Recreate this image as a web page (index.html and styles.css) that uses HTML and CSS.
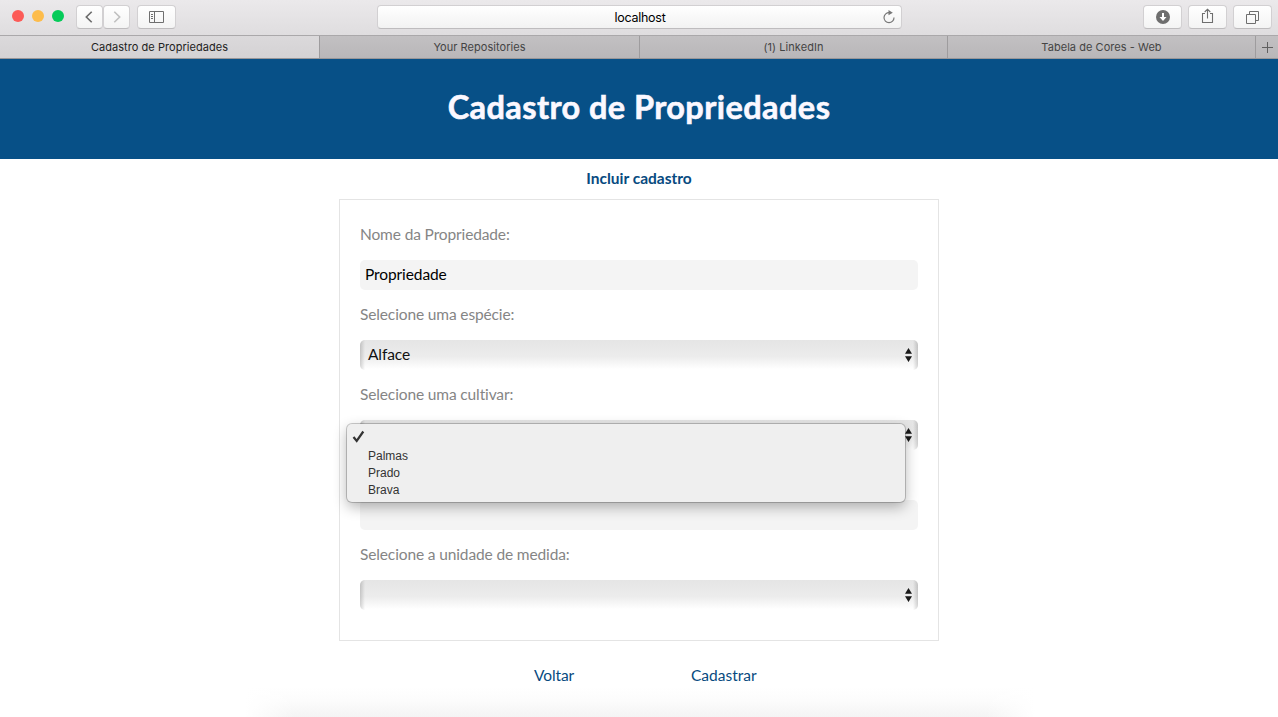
FILE: index.html
```html
<!DOCTYPE html>
<html lang="pt-BR">
<head>
<meta charset="utf-8">
<title>Cadastro de Propriedades</title>
<link rel="stylesheet" href="styles.css">
</head>
<body>
<div class="toolbar">
  <div class="left-tools">
    <div class="lights"><span class="light red"></span><span class="light yellow"></span><span class="light green"></span></div>
    <div class="history">
      <span class="tool nav"><svg width="26" height="22" viewBox="0 0 26 22"><path d="M15.3 5.5 9.7 11l5.6 5.5" fill="none" stroke="#6b6b6b" stroke-width="1.7"/></svg></span>
      <span class="tool nav"><svg width="26" height="22" viewBox="0 0 26 22"><path d="M10.7 5.5l5.6 5.5-5.6 5.5" fill="none" stroke="#c0c0c0" stroke-width="1.7"/></svg></span>
    </div>
    <span class="tool"><svg width="16" height="13" viewBox="0 0 16 13"><path d="M.5.5h14v11H.5zM5.5.5v11M2 3.5h2M2 5.500h2M2 7.500h2" fill="none" stroke="#6f6f6f"/></svg></span>
  </div>
  <div class="address"><span class="host">localhost</span>
    <svg class="reload" width="14" height="15" viewBox="0 0 14 15"><path d="M7.500 2.700A5 5 0 1 0 12 7.500" fill="none" stroke="#777" stroke-width="1.200"/><path d="M6.500 0l4.300 2.700L6.500 5.200z" fill="#777"/></svg>
  </div>
  <div class="right-tools">
    <span class="tool"><svg width="14" height="14" viewBox="0 0 14 14"><circle cx="7" cy="7" r="7" fill="#6e6e6e"/><path d="M7 3v6" stroke="#fff" stroke-width="2"/><path d="M3.500 7h7L7 11z" fill="#fff"/></svg></span>
    <span class="tool"><svg class="share" width="13" height="16" viewBox="0 0 13 16"><path d="M4 5.500H1.500v9h10v-9H9M6.500 10.500V1.500M3.700 4l2.800-2.800L9.300 4" fill="none" stroke="#6e6e6e" stroke-width="1.100"/></svg></span>
    <span class="tool"><svg width="13" height="13" viewBox="0 0 13 13"><path d="M.5 3.500h9v9h-9zM3.500 3.500V.5h9v9h-3" fill="none" stroke="#6e6e6e" stroke-linejoin="round"/></svg></span>
  </div>
</div>
<div class="tabs">
  <div class="tab active">Cadastro de Propriedades</div>
  <div class="tab">Your Repositories</div>
  <div class="tab">(1) LinkedIn</div>
  <div class="tab">Tabela de Cores - Web</div>
  <div class="tab add"><svg width="11" height="11" viewBox="0 0 11 11"><path d="M5.500 0v11M0 5.500h11" stroke="#606060"/></svg></div>
</div>
<header class="banner"><h1>Cadastro de Propriedades</h1></header>
<main>
  <h2>Incluir cadastro</h2>
  <form class="card">
    <label>Nome da Propriedade:</label>
    <div class="field text-value">Propriedade</div>
    <label>Selecione uma espécie:</label>
    <div class="field select"><span>Alface</span><svg width="7" height="14" viewBox="0 0 7 14"><path d="M0 5.700 3.500 0 7 5.700zM0 8.300h7L3.500 14z" fill="#1a1a1a"/></svg></div>
    <label>Selecione uma cultivar:</label>
    <div class="field select"><span></span><svg width="7" height="14" viewBox="0 0 7 14"><path d="M0 5.700 3.500 0 7 5.700zM0 8.300h7L3.500 14z" fill="#1a1a1a"/></svg>
      <div class="menu">
        <div class="checked"><svg width="13" height="13" viewBox="0 0 13 13"><path d="M1.500 7l3.200 4L11.300 1.500" fill="none" stroke="#333" stroke-width="2.200"/></svg></div>
        <div class="option">Palmas</div>
        <div class="option">Prado</div>
        <div class="option">Brava</div>
      </div>
    </div>
    <label></label>
    <div class="field"></div>
    <label>Selecione a unidade de medida:</label>
    <div class="field select"><span></span><svg width="7" height="14" viewBox="0 0 7 14"><path d="M0 5.700 3.500 0 7 5.700zM0 8.300h7L3.500 14z" fill="#1a1a1a"/></svg></div>
  </form>
  <div class="actions"><a class="back">Voltar</a><a class="save">Cadastrar</a></div>
</main>
<div class="dock-shadow"></div>
</body>
</html>
```

FILE: styles.css
```css
* { box-sizing: border-box; }
body {
  margin: 0;
  width: 1278px;
  height: 717px;
  overflow: hidden;
  position: relative;
  background: #fff;
  font-family: Lato, "Liberation Sans", sans-serif;
  font-size: 15.5px;
  font-variant-ligatures: none;
}
svg { display: block; }
.toolbar {
  height: 36px;
  padding: 5px 6px 0 12px;
  display: grid;
  grid-template-columns: 365px 525px 1fr;
  align-items: start;
  background: linear-gradient(#ebe9eb, #dfdddf);
  border-bottom: 1px solid #aaa8aa;
}
.left-tools, .lights, .history, .right-tools { display: flex; }
.lights { gap: 8px; padding-top: 5px; width: 64px; }
.light { width: 12px; height: 12px; border-radius: 50%; }
.red { background: #fc5b57; }
.yellow { background: #fdbc4b; }
.green { background: #05cb59; }
.history { margin-right: 7px; }
.tool {
  width: 39px;
  height: 24px;
  display: flex;
  align-items: center;
  justify-content: center;
  border: 1px solid #d2d0d2;
  border-bottom-color: #bebcbe;
  border-radius: 4px;
  background: linear-gradient(#fff, #f4f4f4);
}
.nav { width: 27px; }
.share { margin-top: -3px; }
.right-tools { gap: 6px; justify-content: flex-end; }
.address {
  height: 24px;
  display: grid;
  grid-template-columns: 1fr auto;
  align-items: center;
  padding: 0 5px 0 20px;
  border: 1px solid #d2d0d2;
  border-bottom-color: #bebcbe;
  border-radius: 4px;
  background: linear-gradient(#fff, #f2f2f2);
}
.host {
  text-align: center;
  font: 12.5px/22px Inter, sans-serif;
  letter-spacing: -0.26px;
  padding-top: 1px;
  color: #000;
}
.reload { margin-top: -1px; }
.tabs {
  height: 23px;
  display: grid;
  grid-template-columns: 320px 320px 308px 308px 22px;
  border-bottom: 1px solid #989698;
  background: linear-gradient(#c2c0c2, #b9b7b9);
  font: 11px/22px Inter, sans-serif;
  letter-spacing: 0.05px;
  color: #444;
}
.tab { border-right: 1px solid #9e9c9e; text-align: center; }
.active { background: linear-gradient(#dbd9db, #d4d2d4); color: #222; }
.add { border: 0; display: flex; align-items: center; justify-content: center; }
.banner {
  height: 100px;
  background: #075087;
  text-align: center;
}
h1 {
  margin: 0;
  font-size: 32.5px;
  line-height: 96px;
  letter-spacing: 0.22px;
  font-weight: 700;
  -webkit-text-stroke: 0.6px #fbf8ff;
  padding-left: 0;
  letter-spacing: 0.42px;
  color: #fbf8ff;
}
h2 {
  margin: 0;
  height: 40px;
  font-size: 15.5px;
  line-height: 38px;
  text-align: center;
  color: #074a80;
}
.card {
  width: 600px;
  height: 442px;
  margin: 0 auto;
  padding: 20px;
  border: 1px solid #e4e4e4;
}
label {
  display: block;
  height: 30px;
  line-height: 28px;
  margin-bottom: 10px;
  letter-spacing: -0.13px;
  color: #858585;
}
.field {
  height: 30px;
  line-height: 28px;
  margin-bottom: 10px;
  border-radius: 5px;
  background: #f4f4f4;
  letter-spacing: -0.1px;
  color: #000;
}
.text-value { padding-left: 5px; }
.select {
  position: relative;
  display: flex;
  justify-content: space-between;
  padding: 0 6px 0 8px;
  color: #111;
  background:
    linear-gradient(90deg, rgba(0,0,0,.16), transparent 5px, transparent calc(100% - 5px), rgba(0,0,0,.16)),
    linear-gradient(#e5e5e5, #ececec 55%, #fff 97%);
}
.select > svg { margin-top: 8px; }
.menu {
  position: absolute;
  z-index: 1;
  left: -13px;
  top: 4px;
  width: 558px;
  height: 78px;
  padding: 4px 0 3px 21px;
  border-radius: 5px;
  background: #efefef;
  box-shadow: 0 0 0 1px rgba(0,0,0,.2), 0 5px 14px rgba(0,0,0,.3);
  font: 12px/17px "Liberation Sans", Arial, sans-serif;
  letter-spacing: 0;
  color: #333;
}
.checked { height: 20px; margin-left: -16px; padding-top: 2px; }
.actions {
  display: flex;
  gap: 117px;
  padding: 20px 0 0 534px;
  line-height: 28px;
  color: #074a80;
}
.back { width: 40px; letter-spacing: -0.1px; }
.dock-shadow {
  position: absolute;
  left: 245px;
  bottom: 0;
  width: 790px;
  height: 30px;
  background:
    linear-gradient(90deg, #fff, transparent 50px, transparent calc(100% - 50px), #fff),
    linear-gradient(#fff, #fcfcfc 45%, #f4f4f4);
}
```
